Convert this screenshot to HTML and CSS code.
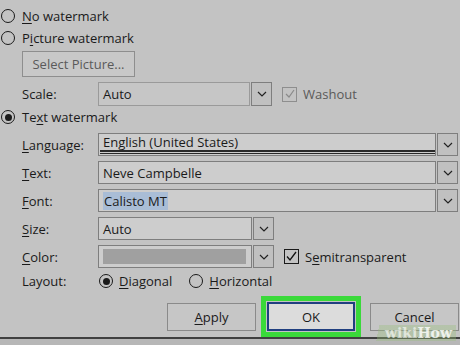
FILE: index.html
```html
<!DOCTYPE html>
<html lang="en">
<head>
    <meta charset="UTF-8">
    <title>Printed Watermark</title>
    <link rel="stylesheet" href="styles.css">
</head>
<body>
    <div class="dialog">
        <div class="opt first"><span class="radio"></span><span><u>N</u>o watermark</span></div>
        <div class="opt"><span class="radio"></span><span>P<u>i</u>cture watermark</span></div>
        <div class="select-btn">Select Picture...</div>
        <div class="row scale">
            <span class="label">Scale:</span>
            <div class="combo short disabled">
                <div class="field">Auto</div>
                <div class="drop"><svg width="10" height="6" viewBox="0 0 10 6"><path d="M1 1 L5 5 L9 1" fill="none" stroke="#222" stroke-width="1.2"/></svg></div>
            </div>
            <span class="check disabled"><svg width="12" height="12" viewBox="0 0 12 12"><path d="M2 6 L5 9 L10 2" fill="none" stroke="#8a8a8a" stroke-width="1.2"/></svg></span>
            <span class="grey">Washout</span>
        </div>
        <div class="opt"><span class="radio on"></span><span>Te<u>x</u>t watermark</span></div>
        <div class="fields">
            <div class="row">
                <span class="label"><u>L</u>anguage:</span>
                <div class="combo">
                    <div class="field lang">English (United States)</div>
                    <div class="drop"><svg width="10" height="6" viewBox="0 0 10 6"><path d="M1 1 L5 5 L9 1" fill="none" stroke="#222" stroke-width="1.2"/></svg></div>
                </div>
            </div>
            <div class="row">
                <span class="label"><u>T</u>ext:</span>
                <div class="combo">
                    <div class="field">Neve Campbelle</div>
                    <div class="drop"><svg width="10" height="6" viewBox="0 0 10 6"><path d="M1 1 L5 5 L9 1" fill="none" stroke="#222" stroke-width="1.2"/></svg></div>
                </div>
            </div>
            <div class="row">
                <span class="label"><u>F</u>ont:</span>
                <div class="combo">
                    <div class="field"><span class="sel">Calisto MT</span></div>
                    <div class="drop"><svg width="10" height="6" viewBox="0 0 10 6"><path d="M1 1 L5 5 L9 1" fill="none" stroke="#222" stroke-width="1.2"/></svg></div>
                </div>
            </div>
            <div class="row">
                <span class="label"><u>S</u>ize:</span>
                <div class="combo short">
                    <div class="field">Auto</div>
                    <div class="drop"><svg width="10" height="6" viewBox="0 0 10 6"><path d="M1 1 L5 5 L9 1" fill="none" stroke="#222" stroke-width="1.2"/></svg></div>
                </div>
            </div>
            <div class="row">
                <span class="label"><u>C</u>olor:</span>
                <div class="combo short">
                    <div class="field"><div class="swatch"></div></div>
                    <div class="drop"><svg width="10" height="6" viewBox="0 0 10 6"><path d="M1 1 L5 5 L9 1" fill="none" stroke="#222" stroke-width="1.2"/></svg></div>
                </div>
                <span class="check"><svg width="13" height="13" viewBox="0 0 13 13"><path d="M2 6.5 L5 10 L11 2" fill="none" stroke="#111" stroke-width="1.3"/></svg></span>
                <span>S<u>e</u>mitransparent</span>
            </div>
        </div>
        <div class="row layout">
            <span class="label">Layout:</span>
            <span class="radio on"></span><span class="rtext"><u>D</u>iagonal</span>
            <span class="radio h"></span><span class="rtext"><u>H</u>orizontal</span>
        </div>
        <div class="buttons">
            <div class="btn"><u>A</u>pply</div>
            <div class="ok-ring"><div class="btn ok">OK</div></div>
            <div class="btn">Cancel</div>
        </div>
        <div class="bottom"></div>
        <div class="wikihow"><span class="wiki">wiki</span>How</div>
    </div>
</body>
</html>
```

FILE: styles.css
```css
/* Page */
body {
    margin: 0;
    background: #c3c3c3;
    font-family: "Open Sans", "Noto Sans", sans-serif;
    font-size: 13px;
    color: #1a1a1a;
}
u {
    text-decoration-thickness: 1px;
    text-underline-offset: 2px;
}
.dialog {
    position: relative;
    width: 460px;
    height: 345px;
    overflow: hidden;
    display: flex;
    flex-direction: column;
}
/* Radio options */
.opt {
    height: 22px;
    display: flex;
    align-items: center;
}
.opt.first {
    margin-top: 5px;
}
.radio {
    width: 12px;
    height: 12px;
    border: 1.5px solid #1a1a1a;
    border-radius: 50%;
    margin-left: 1px;
    margin-right: 7px;
    flex: none;
    position: relative;
}
.radio.on::after {
    content: "";
    position: absolute;
    left: 2.5px;
    top: 2.5px;
    width: 7px;
    height: 7px;
    border-radius: 50%;
    background: #1a1a1a;
}
/* Select picture button */
.select-btn {
    margin: 2px 0 0 22px;
    width: 111px;
    height: 24px;
    border: 1px solid #8e8e8e;
    background: #c8c8c8;
    color: #5a5a5a;
    display: flex;
    align-items: center;
    justify-content: center;
}
/* Label rows */
.row {
    display: flex;
    align-items: center;
    height: 23px;
}
.row.scale {
    margin-top: 5px;
    height: 24px;
}
.label {
    width: 76px;
    margin-left: 22px;
    flex: none;
}
.fields {
    margin-top: 5px;
    display: flex;
    flex-direction: column;
    gap: 5px;
}
/* Combo boxes */
.combo {
    display: flex;
    width: 360px;
    height: 23px;
}
.combo.short {
    width: 176px;
}
.scale .combo.short {
    width: 174px;
    height: 24px;
}
.field {
    flex: 1;
    border: 1px solid #7e7e7e;
    background: #cdcdcd;
    padding-left: 4px;
    display: flex;
    align-items: center;
    box-sizing: border-box;
    min-width: 0;
}
.field.lang {
    position: relative;
    padding-bottom: 5px;
}
.field.lang::after {
    content: "";
    position: absolute;
    left: 1px;
    right: 0;
    bottom: 1px;
    height: 1px;
    border-top: 2px solid #2a2a2a;
    border-bottom: 1px solid #2a2a2a;
}
.drop {
    width: 21px;
    margin-left: 1px;
    border: 1px solid #7e7e7e;
    background: #c0c0c0;
    display: flex;
    align-items: center;
    justify-content: center;
    box-sizing: border-box;
}
.disabled .field {
    background: #c6c6c6;
    border-color: #9a9a9a;
}
.sel {
    background: #a9bdd6;
    padding: 0 1px;
}
.swatch {
    width: 143px;
    height: 15px;
    background: #a0a0a0;
}
/* Check boxes */
.check {
    width: 13px;
    height: 13px;
    border: 1px solid #1a1a1a;
    margin: 0 6px 0 10px;
    display: flex;
    align-items: center;
    justify-content: center;
    flex: none;
}
.check.disabled {
    border-color: #8e8e8e;
}
.grey {
    color: #5a5a5a;
}
/* Layout radios */
.row.layout {
    margin-top: 3px;
    height: 20px;
}
.rtext {
    margin-right: 16px;
}
.layout .radio {
    margin-right: 6px;
}
/* Dialog buttons */
.buttons {
    margin-top: 5px;
    height: 41px;
    display: flex;
    align-items: center;
    padding-left: 167px;
}
.btn {
    width: 87px;
    height: 26px;
    border: 1px solid #8a8a8a;
    background: #c6c6c6;
    display: flex;
    align-items: center;
    justify-content: center;
    flex: none;
}
.ok-ring {
    margin-left: 5px;
    margin-right: 9px;
    border: 5px solid #3ad93a;
    padding: 1px;
    flex: none;
}
.btn.ok {
    width: 84px;
    height: 25px;
    border: 2px solid #213f80;
    background: #dcdcdc;
}
.bottom {
    flex: 1;
    border-top: 2px solid #404040;
    background: #b7b7b7;
}
/* Watermark overlay */
.wikihow {
    position: absolute;
    right: 4px;
    bottom: 4px;
    padding: 0 4px 0 14px;
    font-family: "DejaVu Serif", serif;
    font-weight: bold;
    font-size: 14px;
    color: rgba(255, 255, 255, 0.8);
    background: linear-gradient(100deg, transparent 0 8px, rgba(150, 190, 120, 0.35) 8px);
}
.wiki {
    color: rgba(255, 255, 255, 0.6);
}
```
